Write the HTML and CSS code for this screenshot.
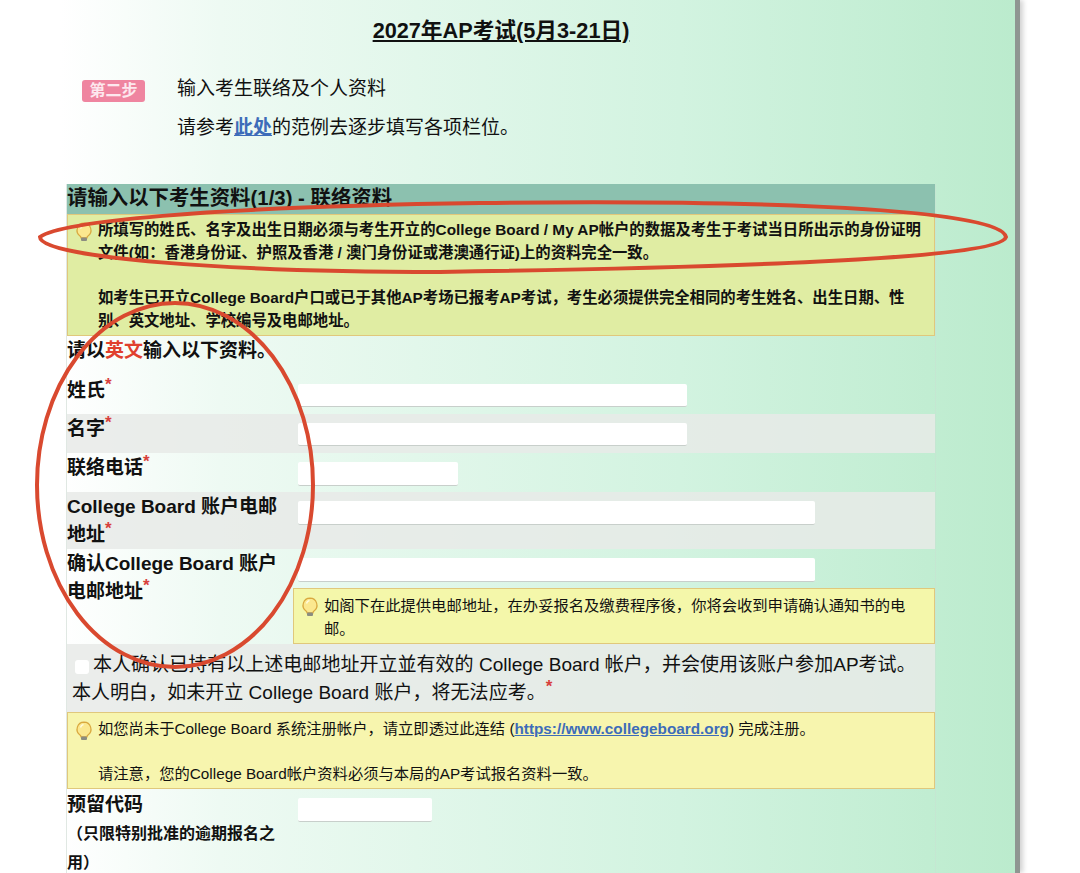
FILE: index.html
```html
<!DOCTYPE html>
<html lang="zh-CN">
  <head>
    <meta charset="UTF-8" />
    <title>AP考试报名</title>
    <link rel="stylesheet" href="styles.css">
  </head>
  <body>
    <div class="panel">
      <h1 class="title">2027年AP考试(5月3-21日)</h1>

      <div class="step">
        <span class="badge">第二步</span>
        <div class="step-text">
          <p>输入考生联络及个人资料</p>
          <p>请参考<a href="#">此处</a>的范例去逐步填写各项栏位。</p>
        </div>
      </div>

      <div class="form">
        <div class="form-head">请输入以下考生资料(1/3) - 联络资料</div>

        <div class="tip tip-warn">
          <svg class="bulb" viewBox="0 0 18 20"><use href="#bulb" /></svg>
          <p>所填写的姓氏、名字及出生日期必须与考生开立的College Board / My AP帐户的数据及考生于考试当日所出示的身份证明<br>文件(如：香港身份证、护照及香港 / 澳门身份证或港澳通行证)上的资料完全一致。<br><br>如考生已开立College Board户口或已于其他AP考场已报考AP考试，考生必须提供完全相同的考生姓名、出生日期、性<br>别、英文地址、学校编号及电邮地址。</p>
        </div>

        <div class="intro">请以<span class="red">英文</span>输入以下资料。</div>

        <div class="row row-first">
          <label>姓氏<sup>*</sup></label>
          <div class="cell"><input class="w-long" type="text"></div>
        </div>
        <div class="row row-grey">
          <label>名字<sup>*</sup></label>
          <div class="cell"><input class="w-long" type="text"></div>
        </div>
        <div class="row">
          <label>联络电话<sup>*</sup></label>
          <div class="cell"><input class="w-short" type="text"></div>
        </div>
        <div class="row row-grey row-tall">
          <label>College Board 账户电邮<br>地址<sup>*</sup></label>
          <div class="cell"><input class="w-full" type="text"></div>
        </div>
        <div class="row">
          <label>确认College Board 账户<br>电邮地址<sup>*</sup></label>
          <div class="cell">
            <input class="w-full" type="text">
            <div class="tip tip-side">
              <svg class="bulb" viewBox="0 0 18 20"><use href="#bulb" /></svg>
              <p>如阁下在此提供电邮地址，在办妥报名及缴费程序後，你将会收到申请确认通知书的电<br>邮。</p>
            </div>
          </div>
        </div>

        <div class="confirm">
          <input class="check" type="checkbox">本人确认已持有以上述电邮地址开立並有效的 College Board 帐户，并会使用该账户参加AP考试。<br>本人明白，如未开立 College Board 账户，将无法应考。<sup>*</sup>
        </div>

        <div class="tip tip-note">
          <svg class="bulb" viewBox="0 0 18 20"><use href="#bulb" /></svg>
          <p>如您尚未于College Board 系统注册帐户，请立即透过此连结 (<a href="#">https://www.collegeboard.org</a>) 完成注册。<br><br>请注意，您的College Board帐户资料必须与本局的AP考试报名资料一致。</p>
        </div>

        <div class="row row-last">
          <label>预留代码<small>（只限特别批准的逾期报名之<br>用）</small></label>
          <div class="cell"><input class="w-code" type="text"></div>
        </div>
      </div>

      <!-- hand drawn marks on top of the form -->
      <svg class="marks" viewBox="0 0 1080 873">
        <path d="M40 237 C60 222 200 207 480 203 C700 200 1000 205 1006 237 C1000 260 700 268 440 272 C230 272 40 258 40 237 Z" />
        <ellipse cx="175" cy="485" rx="138" ry="182" />
      </svg>
    </div>

    <svg class="defs" width="0" height="0">
      <defs>
        <g id="bulb">
          <path d="M9 1.2a7 7 0 0 0-4 12.7c.8.6 1 1.3 1 2h6c0-.7.2-1.4 1-2a7 7 0 0 0-4-12.7z" fill="#fbe88f" stroke="#d9a83f" stroke-width="1.2" />
          <path d="M5.5 6.5a4 4 0 0 1 3-3" fill="none" stroke="#fffbe0" stroke-width="1.4" />
          <rect x="6" y="15.6" width="6" height="3.4" rx="1" fill="#8b8c80" />
        </g>
      </defs>
    </svg>
  </body>
</html>
```

FILE: styles.css
```css
* {
  box-sizing: border-box;
}

html,
body {
  margin: 0;
  height: 873px;
  overflow: hidden;
  background-color: #fff;
}

body {
  font-family: "Liberation Sans", "Noto Sans CJK SC", sans-serif;
  color: #111;
}

p {
  margin: 0;
}

.panel {
  position: relative;
  width: 1020px;
  height: 873px;
  padding: 16px 0 0 67px;
  overflow: visible;
  background: linear-gradient(90deg, #fff 60px, #eefaf3 220px, #d2f3e0 680px, #bbebcd 1015px);
  border-right: 5px solid #8f9692;
  box-shadow: 3px 0 5px rgba(0, 0, 0, 0.18);
}

.title {
  width: 868px;
  margin: 0;
  font-size: 21.7px;
  line-height: 30px;
  text-align: center;
  text-decoration: underline;
}

.step {
  display: flex;
  gap: 32px;
  margin-top: 23px;
  padding-left: 15px;
  font-size: 19px;
  line-height: 39px;
}

.step a {
  color: #3d6cb9;
  font-weight: bold;
}

.badge {
  width: 63px;
  height: 22px;
  margin-top: 11px;
  border-radius: 3px;
  background-color: #ef85a0;
  color: #fde8ee;
  font-size: 16px;
  font-weight: bold;
  line-height: 22px;
  text-align: center;
}

.form {
  width: 868px;
  min-height: 700px;
  margin-top: 37px;
  box-shadow: -1px 0 0 #e0e8e3, 1px 0 0 rgba(200, 225, 210, 0.6);
}

.form-head {
  height: 30px;
  background-color: #8cc1af;
  font-size: 20.4px;
  font-weight: bold;
  line-height: 29px;
}

.tip {
  display: flex;
  gap: 5px;
  padding-left: 7px;
  border: 1px solid #e0c87c;
  font-size: 15.3px;
  font-weight: normal;
  white-space: nowrap;
}

.tip a {
  color: #3d6cb9;
  font-weight: bold;
}

.bulb {
  flex: none;
  width: 18px;
  height: 20px;
  margin-top: 3px;
}

.defs {
  position: absolute;
}

.tip-warn {
  height: 122px;
  padding-top: 4px;
  background-color: #e0eda3;
  font-size: 15.35px;
  font-weight: bold;
  line-height: 22.75px;
}

.tip-side {
  height: 56px;
  margin: 6px 0 0 -5px;
  padding-top: 5px;
  background-color: #f4f7aa;
  line-height: 23px;
}

.tip-note {
  height: 77px;
  padding-top: 4.5px;
  background-color: #f7f5ae;
  line-height: 22.5px;
}

.intro {
  height: 26px;
  padding-top: 3px;
  font-size: 19px;
  font-weight: bold;
  line-height: 24px;
}

.red {
  color: #e0402e;
}

sup {
  color: #d8403c;
  font-size: 17px;
  font-weight: bold;
  line-height: 0;
}

.row {
  display: grid;
  grid-template-columns: 231px 1fr;
  min-height: 39px;
  font-size: 19px;
  font-weight: bold;
  line-height: 28px;
}

.row label {
  padding-top: 1px;
}

.row-grey {
  background-color: rgba(232, 234, 232, 0.85);
}

.row-tall {
  height: 57px;
}

.row-first {
  height: 52px;
  padding-top: 14px;
}

.row-first .cell {
  padding-top: 8px;
}

.row-last {
  padding-top: 1px;
}

.row-last .cell {
  padding-top: 8px;
}

.row small {
  display: block;
  font-size: 16px;
  line-height: 29px;
}

.cell {
  padding-top: 9px;
}

.cell input {
  display: block;
  height: 24px;
  padding: 0;
  border: 0;
  border-bottom: 1px solid #c8cfcb;
  border-radius: 2px;
  background-color: #fff;
}

.cell .w-long {
  width: 389px;
  height: 23px;
}

.w-short {
  width: 160px;
}

.w-full {
  width: 517px;
}

.w-code {
  width: 134px;
}

.confirm {
  height: 68px;
  padding: 6.5px 0 0 5px;
  background-color: rgba(232, 234, 232, 0.85);
  font-size: 19.05px;
  line-height: 28px;
  white-space: nowrap;
}

.check {
  appearance: none;
  width: 14px;
  height: 14px;
  margin: 0 4px 0 3px;
  border-radius: 3px;
  background-color: #fff;
  vertical-align: -3px;
}

.marks {
  position: absolute;
  top: 0;
  left: 0;
  width: 1080px;
  height: 873px;
  overflow: visible;
  pointer-events: none;
}

.marks path,
.marks ellipse {
  fill: none;
  stroke: #d9492f;
  stroke-width: 4;
}
```
